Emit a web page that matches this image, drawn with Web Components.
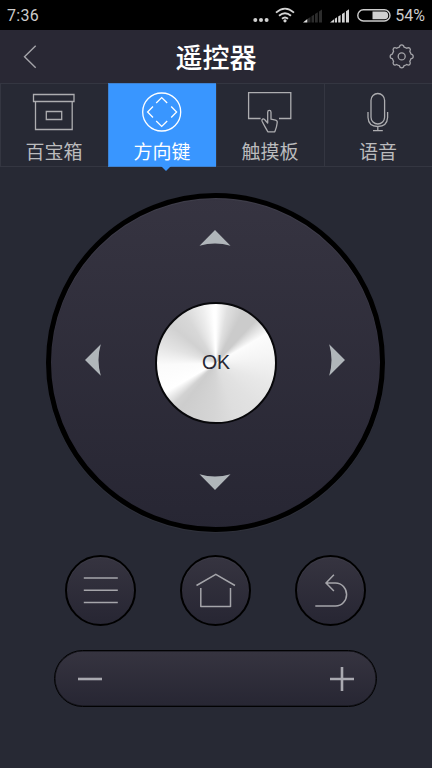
<!DOCTYPE html>
<html lang="zh-CN">
<head>
<meta charset="utf-8">
<title>遥控器</title>
<style>
html,body{margin:0;height:100%}
body{background:#272934;overflow:hidden;font-family:"Noto Sans CJK SC",sans-serif}
</style>
</head>
<body>
<remote-app></remote-app>
<script>
const define = (name, html) => {
  const template = document.createElement('template');
  template.innerHTML = html;
  customElements.define(name, class extends HTMLElement {
    constructor() {
      super();
      this.attachShadow({mode: 'open'}).append(template.content.cloneNode(true));
    }
  });
};

const icons = {
  back: [14, 24, '<path d="M12.7.7 1.5 11.7 12.7 22.7" stroke-width="1.4"/>'],
  gear: [26, 26, '<g transform="translate(-.3 -.6)"><circle cx="13" cy="13" r="3.5"/><path d="M10.7 3.7Q11 1.5 13 1.5T15.3 3.7Q16.8 4.1 18 4.9Q19.9 3.8 21.1 4.9T21.1 8Q21.9 9.2 22.3 10.7Q24.5 11 24.5 13T22.3 15.3Q21.9 16.8 21.1 18Q22.2 19.9 21.1 21.1T18 21.1Q16.8 21.9 15.3 22.3Q15 24.5 13 24.5T10.7 22.3Q9.2 21.9 8 21.1Q6.1 22.2 4.9 21.1T4.9 18Q4.1 16.8 3.7 15.3Q1.5 15 1.5 13T3.7 10.7Q4.1 9.2 4.9 8Q3.8 6.1 4.9 4.9T8 4.9Q9.2 4.1 10.7 3.7Z" stroke-linejoin="round"/></g>'],
  box: [44, 40, '<path d="M2.5 2.5H43V9.5H2.5ZM4.5 9.5V37.5H41.2V9.5M15.3 19.5H30.7V27.5H15.3Z"/>'],
  dpad: [44, 40, '<circle cx="22.7" cy="20" r="19"/><path d="M17.2 11 22.7 5.6 28.2 11M17.2 29 22.7 34.4 28.2 29M14 14.5 8.6 20 14 25.5M32.2 14.5 37.6 20 32.2 25.5"/>'],
  touch: [44, 42, '<path d="M13.6 26.5H1.6V.6H43.8V26.5H32"/><path d="M20.7 31V20.2C20.7 17.8 24 17.8 24 20.2V27.2L28.6 28.2Q30.5 28.7 30.2 30.7C29.9 34 29.2 36.5 27.8 39.8H20.8C18.6 35.5 17.2 33.7 15.1 29.3 14.2 27.3 16.4 26 17.8 27.8Z" stroke-linejoin="round"/>'],
  mic: [44, 40, '<rect x="16" y="1.5" width="13.6" height="30.5" rx="6.8"/><path d="M13 20V25.5Q13.5 34.5 22.8 34.5T32.6 25.5V20M22.8 34.5V38.5M18 38.7H27.8"/>'],
  up: [32, 16, '<path d="M.5 15.8 16 0 31.5 15.8Q16 11.2.5 15.8Z" fill="#b0b6ba" stroke="none"/>'],
  down: [32, 16, '<path d="M.5.2 16 16 31.5.2Q16 4.8.5.2Z" fill="#b0b6ba" stroke="none"/>'],
  left: [16, 32, '<path d="M15.8.3 0 16 15.8 31.7Q11.2 16 15.8.3Z" fill="#b0b6ba" stroke="none"/>'],
  right: [16, 32, '<path d="M.2.3 16 16 .2 31.7Q4.8 16 .2.3Z" fill="#b0b6ba" stroke="none"/>'],
  menu: [39, 39, '<path d="M2.8 7H36.8M2.8 19.3H36.8M2.8 31.5H36.8" stroke-width="1.5"/>'],
  home: [39, 39, '<path d="M.5 14.5 19.8 3.3 39 14.5M4.8 17V35.5H34.5V17" stroke-width="1.5" stroke-linejoin="round"/>'],
  undo: [39, 39, '<path d="M22.9 3.7 15 11.9 22.9 20M15.2 11.9H24.5C31 11.9 35.6 17.5 35.6 23.5S31 35.1 24.5 35.1H4.3" stroke-width="1.5"/>'],
  minus: [26, 26, '<path d="M1 13H25" stroke="#a9a9b0" stroke-width="2.6"/>'],
  plus: [26, 26, '<path d="M1 13H25M13 1V25" stroke="#a9a9b0" stroke-width="2.6"/>'],
  dots: [16, 6, '<g fill="#d0d0d0" stroke="none"><circle cx="2.3" cy="3" r="2"/><circle cx="8" cy="3" r="2"/><circle cx="13.6" cy="3" r="2"/></g>'],
  wifi: [20, 16, '<g stroke="#d4d4d4" stroke-width="1.8"><path d="M1 5.6Q10-2.4 19 5.6M4 8.8Q10 3.6 16 8.8M7 11.8Q10 9.2 13 11.8"/></g><circle cx="10" cy="13.8" r="1.6" fill="#d4d4d4" stroke="none"/>'],
  weak: [20, 14, '<g fill="#2c2c2c" stroke="none"><path d="M4.5 9.8 7.5 8V13.5H4.5ZM8.5 7.3 11 5.8V13.5H8.5ZM12 5 14.8 3.2V13.5H12ZM16 2.5 19 .5V13.5H16Z"/><path d="M0 13.5 4.3 10V13.5Z" fill="#ddd"/></g>'],
  signal: [20, 14, '<g fill="#d4d4d4" stroke="none"><path d="M0 13.5 4 10.3V13.5ZM4.8 9.8 7 8.3V13.5H4.8ZM8.2 7.5 10.6 6V13.5H8.2ZM12 5 14.7 3.2V13.5H12ZM16 2.2 19 .3V13.5H16Z"/></g>'],
  battery: [34, 13, '<rect x=".8" y=".8" width="32.2" height="11.2" rx="5.6" stroke="#ccc" stroke-width="1.4"/><path d="M15.5 2.6H27.5Q31.2 2.6 31.2 6.4T27.5 10.2H15.5Z" fill="#d0d0d0" stroke="none"/>']
};

customElements.define('line-icon', class extends HTMLElement {
  connectedCallback() {
    const [w, h, art] = icons[this.getAttribute('name')];
    if (!this.shadowRoot) this.attachShadow({mode: 'open'});
    this.shadowRoot.innerHTML = `<style>:host{display:block;flex:none;width:${w}px;height:${h}px}svg{display:block;overflow:visible}</style>
      <svg width="${w}" height="${h}" fill="none" stroke="currentColor" stroke-width="1.3">${art}</svg>`;
  }
});

define('status-bar', `<style>
:host{display:flex;box-sizing:border-box;height:30px;padding:1px 7px 0 7px;background:#000;color:#ccc;align-items:center;font:16px Roboto,sans-serif}
.time{flex:1;letter-spacing:.3px}
.dots{margin:8px 6px 0 0}.wifi{margin:-1px 8px 0 0}.weak{margin:1px 7px 0 0}.signal{margin:1px 7px 0 0}.battery{margin:-1px 4px 0 0}
</style><span class="time">7:36</span>
<line-icon class="dots" name="dots"></line-icon><line-icon class="wifi" name="wifi"></line-icon><line-icon class="weak" name="weak"></line-icon><line-icon class="signal" name="signal"></line-icon><line-icon class="battery" name="battery"></line-icon><span>54%</span>`);

define('title-bar', `<style>
:host{display:flex;box-sizing:border-box;height:53px;padding:0 17px 0 23px;background:#292834;color:#a4a4a9;align-items:center;justify-content:space-between}
h1{margin:0 0 0 6px;font-size:27px;line-height:40px;font-weight:500;color:#fff}
</style><line-icon name="back"></line-icon><h1><slot></slot></h1><line-icon name="gear"></line-icon>`);

define('tab-item', `<style>
:host{display:flex;position:relative;flex-direction:column;align-items:center;box-sizing:border-box;height:84px;padding-top:8px;border:1px solid #343641;border-right-width:0;color:#adadb0}
:host([active]){background:#3996ff;color:#fff;border-color:#3d82d2}
::slotted(line-icon){margin-right:3.5px}
.label{margin:5px 1px 0 0;font-size:19px;line-height:28px;color:#bbbbbd}
:host([active]) .label{color:#fff}
:host([active])::after{content:"";position:absolute;top:82px;left:52px;border:5px solid transparent;border-top-color:#3996ff;border-bottom:0}
</style><slot name="icon"></slot><span class="label"><slot></slot></span>`);

define('tab-strip', `<style>
:host{display:grid;grid-template-columns:repeat(4,1fr)}
line-icon{height:40px}
</style>
<tab-item><line-icon slot="icon" name="box"></line-icon>百宝箱</tab-item>
<tab-item active><line-icon slot="icon" name="dpad"></line-icon>方向键</tab-item>
<tab-item><line-icon slot="icon" name="touch"></line-icon>触摸板</tab-item>
<tab-item><line-icon slot="icon" name="mic"></line-icon>语音</tab-item>`);

define('direction-pad', `<style>
:host{display:grid;box-sizing:border-box;width:339px;height:339px;border:5px solid #000;border-radius:50%;background:linear-gradient(#363441,#272633) border-box;grid-template:103px 1fr 103px/104px 1fr 104px;align-items:center;justify-items:center;box-shadow:inset 0 1px 1px #403f4b,0 1px 1px #30323b}
.up{grid-area:1/2;align-self:start;margin:31.5px 0 0 -1.5px}
.left{grid-area:2/1;justify-self:start;margin:-6px 0 0 33.5px}
.ok{grid-area:2/2;box-sizing:border-box;width:122px;height:122px;border:2px solid #08080b;border-radius:50%;display:flex;align-items:center;justify-content:center;color:#272733;font:19.5px "Liberation Sans",sans-serif;background:conic-gradient(#fff 0deg,#e0e0e0 12deg,#cbcbcb 28deg,#cbcbcb 43deg,#fcfcfc 60deg,#f5f5f5 82deg,#e8e8e8 112deg,#e2e2e2 135deg,#dedede 160deg,#d5d5d5 182deg,#cdcdcd 218deg,#d2d2d2 226deg,#fff 240deg,#fbfbfb 268deg,#e3e3e3 288deg,#d1d1d1 310deg,#d8d8d8 328deg,#eee 346deg,#fff 357deg)}
.right{grid-area:2/3;justify-self:end;margin:-6px 36px 0 0}
.down{grid-area:3/2;align-self:end;margin:0 0 37.5px -1.5px}
</style>
<line-icon class="up" name="up"></line-icon><line-icon class="left" name="left"></line-icon><div class="ok"><slot></slot></div><line-icon class="right" name="right"></line-icon><line-icon class="down" name="down"></line-icon>`);

define('round-key', `<style>
:host{display:flex;box-sizing:border-box;width:71px;height:71px;border:2px solid #000;border-radius:50%;background:linear-gradient(#363440,#272633);align-items:center;justify-content:center;color:#a5a5aa;box-shadow:inset 0 1px 1px #3c3b46}
</style><slot></slot>`);

define('volume-bar', `<style>
:host{display:flex;box-sizing:border-box;width:323px;height:57px;border:1px solid #020203;border-radius:28.5px;padding:0 21px 0 22px;align-items:center;justify-content:space-between;background:linear-gradient(#363440,#272633);box-shadow:inset 0 0 0 .6px #111117}
</style><line-icon name="minus"></line-icon><line-icon name="plus"></line-icon>`);

define('remote-app', `<style>
:host{display:flex;flex-direction:column;width:432px;height:768px;background:#272934}
main{display:flex;flex-direction:column;align-items:center;padding:26px 1px 0 0}
.keys{display:flex;gap:44px;margin-top:23px}
volume-bar{margin-top:24px}
</style>
<status-bar></status-bar><title-bar>遥控器</title-bar><tab-strip></tab-strip>
<main><direction-pad>OK</direction-pad>
<div class="keys"><round-key><line-icon name="menu"></line-icon></round-key><round-key><line-icon name="home"></line-icon></round-key><round-key><line-icon name="undo"></line-icon></round-key></div>
<volume-bar></volume-bar></main>`);
</script>
</body>
</html>
